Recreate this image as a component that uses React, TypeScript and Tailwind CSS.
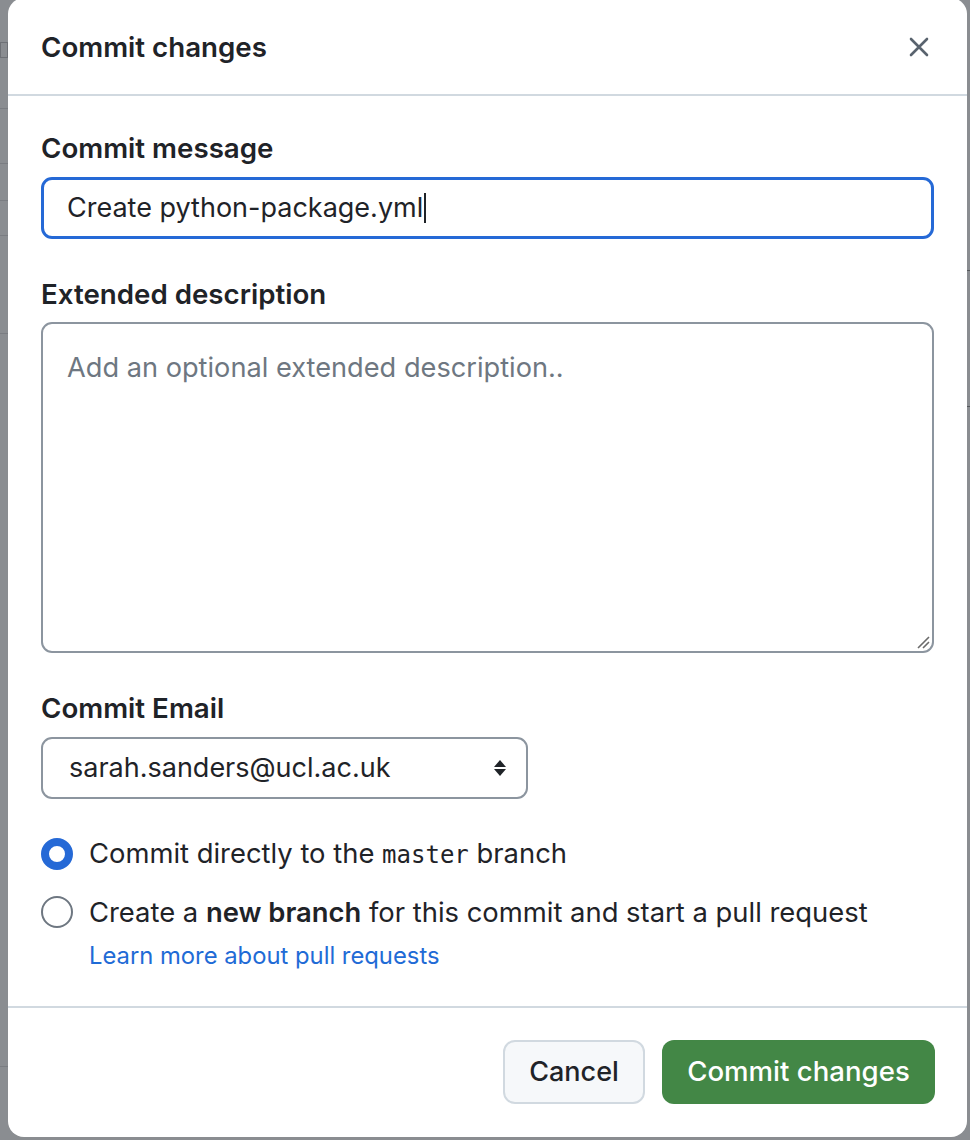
import React from "react";

function CloseIcon() {
  return (
    <svg width="20" height="20" viewBox="0 0 20 20" fill="none">
      <path d="M2 2 L18 18 M18 2 L2 18" stroke="#59636e" strokeWidth="2.6" strokeLinecap="round" />
    </svg>
  );
}

function SelectArrows() {
  return (
    <svg width="14" height="20" viewBox="0 0 14 20">
      <path d="M7 2 L13 9 L1 9 Z" fill="#1f2328" />
      <path d="M1 11 L13 11 L7 18 Z" fill="#1f2328" />
    </svg>
  );
}

function ResizeHandle() {
  return (
    <svg width="14" height="14" viewBox="0 0 14 14" className="absolute right-[2px] bottom-[2px]">
      <path d="M13 2 L2 13 M13 7 L7 13" stroke="#6b6b6b" strokeWidth="1.6" />
    </svg>
  );
}

export default function App() {
  return (
    <div className="relative w-[970px] h-[1140px] overflow-hidden bg-[#8a8d91] font-['Inter','Noto_Sans',sans-serif] text-[#1f2328]">
      {/* faint backdrop remnants */}
      <div className="absolute left-0 top-[42px] w-[8px] h-[16px] border border-[#6e7176]" />
      <div className="absolute left-0 top-[108px] w-[8px] h-px bg-[#7a7d82]" />
      <div className="absolute left-0 top-[163px] w-[8px] h-px bg-[#7a7d82]" />
      <div className="absolute left-0 top-[200px] w-[8px] h-px bg-[#7a7d82]" />
      <div className="absolute left-0 top-[235px] w-[8px] h-px bg-[#7a7d82]" />
      <div className="absolute left-0 top-[333px] w-[8px] h-px bg-[#7a7d82]" />
      <div className="absolute left-0 top-[1066px] w-[8px] h-px bg-[#7a7d82]" />
      <div className="absolute right-0 top-[270px] w-[3px] h-px bg-[#55585c]" />
      <div className="absolute right-0 top-[406px] w-[3px] h-px bg-[#55585c]" />

      <div className="flex pl-[8px] -mt-[2px]">
        <div className="w-[959px] h-[1139px] bg-white rounded-[16px] flex flex-col">
          {/* Header */}
          <div className="h-[98px] border-b-2 border-[#d1d9e0] flex items-center justify-between pl-[33px] pr-[38px] pt-[2px]">
            <div className="text-[27.7px] leading-[36px] font-semibold">Commit changes</div>
            <CloseIcon />
          </div>

          {/* Body */}
          <div className="px-[33px] pt-[34px] pb-[34px] flex flex-col border-b-2 border-[#d1d9e0]">
            <div className="text-[27.7px] leading-[36px] font-semibold">Commit message</div>
            <div className="mt-[11px] h-[62px] rounded-[11px] border-[3px] border-[#2569d6] flex items-center pl-[23px]">
              <span className="text-[27px] leading-[36px]">Create python-package.yml</span>
              <span className="w-[2px] h-[30px] bg-[#1f2328] ml-[1px]" />
            </div>

            <div className="mt-[37px] text-[27.7px] leading-[36px] font-semibold">Extended description</div>
            <div className="relative mt-[10px] h-[331px] rounded-[11px] border-2 border-[#8c959f] pl-[24px] pt-[26px]">
              <span className="text-[27.2px] leading-[36px] text-[#6e7781]">Add an optional extended description..</span>
              <ResizeHandle />
            </div>

            <div className="mt-[37px] text-[27.7px] leading-[36px] font-semibold">Commit Email</div>
            <div className="mt-[11px] w-[487px] h-[62px] rounded-[11px] border-2 border-[#8c959f] flex items-center justify-between pl-[26px] pr-[19px]">
              <span className="text-[27px] leading-[36px]">sarah.sanders@ucl.ac.uk</span>
              <SelectArrows />
            </div>

            <div className="mt-[37px] flex items-center h-[36px]">
              <span className="w-[32px] h-[32px] rounded-full border-[8.5px] border-[#2569d6] bg-white" />
              <span className="ml-[16px] text-[27.4px] leading-[36px]">
                Commit directly to the{" "}
                <span className="font-['DejaVu_Sans_Mono','Liberation_Mono',monospace] text-[24px]">master</span>{" "}
                branch
              </span>
            </div>
            <div className="mt-[22px] flex items-center h-[36px]">
              <span className="w-[32px] h-[32px] rounded-full border-2 border-[#6e7781] bg-white" />
              <span className="ml-[16px] text-[27.4px] leading-[36px]">
                Create a <span className="font-semibold">new branch</span> for this commit and start a pull request
              </span>
            </div>
            <div className="mt-[10px] pl-[48px] text-[23.8px] leading-[32px] text-[#1f6bd6]">Learn more about pull requests</div>
          </div>

          {/* Footer */}
          <div className="flex justify-end gap-[17px] pt-[32px] pr-[32px]">
            <button className="w-[142px] h-[64px] rounded-[12px] border-2 border-[#d1d9e0] bg-[#f6f8fa] text-[27px] font-medium text-[#1f2328]">
              Cancel
            </button>
            <button className="w-[273px] h-[64px] rounded-[12px] bg-[#438746] text-[27.6px] font-medium text-white">
              Commit changes
            </button>
          </div>
        </div>
      </div>
    </div>
  );
}
